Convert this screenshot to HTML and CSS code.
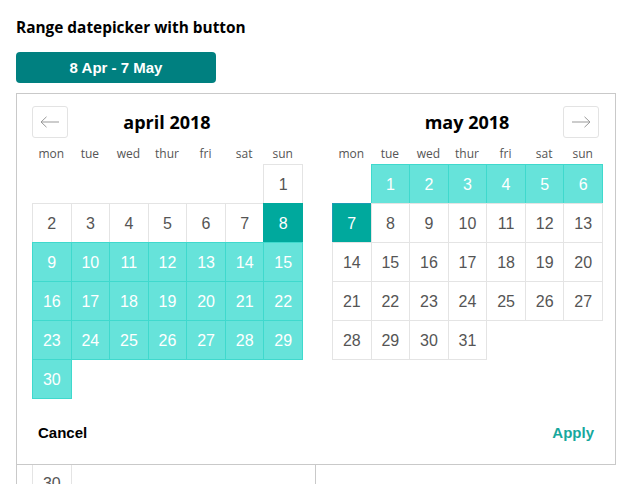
FILE: index.html
```html
<!DOCTYPE html>
<html lang="en">
  <head>
    <meta charset="UTF-8" />
    <meta name="viewport" content="width=device-width, initial-scale=1.0" />
    <title>Range Datepicker</title>
    <link rel="stylesheet" href="styles.css">
  </head>
  <body>
    <div class="page">
      <h3 class="demo-title">Range datepicker with button</h3>

      <div class="picker">
        <button class="picker-toggle">8 Apr - 7 May</button>

        <div class="popup">
          <div class="months">
            <section class="month">
              <div class="month-head">
                <button class="nav nav-prev" aria-label="previous month">
                  <svg width="20" height="12" viewBox="0 0 20 12"><path d="M19 6H1M6.5 0.8L1 6l5.5 5.2" fill="none" stroke="#999" stroke-width="1"/></svg>
                </button>
                <h4 class="month-title">april 2018</h4>
              </div>
              <div class="weekdays">
                <span>mon</span><span>tue</span><span>wed</span><span>thur</span><span>fri</span><span>sat</span><span>sun</span>
              </div>
              <div class="days">
                <span class="empty"></span><span class="empty"></span><span class="empty"></span><span class="empty"></span><span class="empty"></span><span class="empty"></span>
                <span class="day">1</span>
                <span class="day">2</span><span class="day">3</span><span class="day">4</span><span class="day">5</span><span class="day">6</span><span class="day">7</span>
                <span class="day selected">8</span>
                <span class="day in-range">9</span><span class="day in-range">10</span><span class="day in-range">11</span><span class="day in-range">12</span><span class="day in-range">13</span><span class="day in-range">14</span><span class="day in-range">15</span>
                <span class="day in-range">16</span><span class="day in-range">17</span><span class="day in-range">18</span><span class="day in-range">19</span><span class="day in-range">20</span><span class="day in-range">21</span><span class="day in-range">22</span>
                <span class="day in-range">23</span><span class="day in-range">24</span><span class="day in-range">25</span><span class="day in-range">26</span><span class="day in-range">27</span><span class="day in-range">28</span><span class="day in-range">29</span>
                <span class="day in-range">30</span>
              </div>
            </section>

            <section class="month">
              <div class="month-head">
                <h4 class="month-title">may 2018</h4>
                <button class="nav nav-next" aria-label="next month">
                  <svg width="20" height="12" viewBox="0 0 20 12"><path d="M1 6h18M13.5 0.8L19 6l-5.5 5.2" fill="none" stroke="#999" stroke-width="1"/></svg>
                </button>
              </div>
              <div class="weekdays">
                <span>mon</span><span>tue</span><span>wed</span><span>thur</span><span>fri</span><span>sat</span><span>sun</span>
              </div>
              <div class="days">
                <span class="empty"></span>
                <span class="day in-range">1</span><span class="day in-range">2</span><span class="day in-range">3</span><span class="day in-range">4</span><span class="day in-range">5</span><span class="day in-range">6</span>
                <span class="day selected focused">7</span>
                <span class="day">8</span><span class="day">9</span><span class="day">10</span><span class="day">11</span><span class="day">12</span><span class="day">13</span>
                <span class="day">14</span><span class="day">15</span><span class="day">16</span><span class="day">17</span><span class="day">18</span><span class="day">19</span><span class="day">20</span>
                <span class="day">21</span><span class="day">22</span><span class="day">23</span><span class="day">24</span><span class="day">25</span><span class="day">26</span><span class="day">27</span>
                <span class="day">28</span><span class="day">29</span><span class="day">30</span><span class="day">31</span>
              </div>
            </section>
          </div>

          <div class="popup-footer">
            <button class="link-btn cancel">Cancel</button>
            <button class="link-btn apply">Apply</button>
          </div>
        </div>
      </div>

      <!-- the next demo sits under the open popup, only its last row shows -->
      <div class="inline-cal">
        <div class="days">
          <span class="day">30</span>
        </div>
      </div>
    </div>
  </body>
</html>
```

FILE: styles.css
```css
body {
  margin: 0;
  padding: 0;
  background-color: #fff;
  font-family: "Liberation Sans", Arial, sans-serif;
  color: #000;
}

.page {
  padding: 16px;
  height: 484px;
  box-sizing: border-box;
  overflow: hidden;
}

.demo-title {
  margin: 0;
  font-family: "Open Sans", "Noto Sans", sans-serif;
  font-size: 15.4px;
  font-weight: 700;
  line-height: 24px;
}

.picker {
  position: relative;
  margin-top: 12px;
}

.picker-toggle {
  display: block;
  width: 200px;
  height: 31px;
  padding: 0;
  border: none;
  border-radius: 4px;
  background-color: #008080;
  color: #fff;
  font-family: "Liberation Sans", Arial, sans-serif;
  font-size: 15px;
  font-weight: 700;
  cursor: pointer;
}

.popup {
  position: absolute;
  top: 41px;
  left: 0;
  z-index: 10;
  width: 600px;
  box-sizing: border-box;
  border: 1px solid #c9c9c9;
  background-color: #fff;
}

.months {
  display: flex;
  gap: 30px;
  padding: 12px 13px 0 15px;
}

.month {
  width: 270px;
}

.month-head {
  display: grid;
  grid-template-columns: 36px 1fr 36px;
  align-items: center;
  height: 32px;
}

.month-title {
  grid-column: 2;
  grid-row: 1;
  margin: 0;
  text-align: center;
  font-family: "Open Sans", "Noto Sans", sans-serif;
  font-size: 18px;
  font-weight: 700;
  line-height: 24px;
}

.nav {
  grid-row: 1;
  display: flex;
  align-items: center;
  justify-content: center;
  width: 36px;
  height: 32px;
  padding: 0;
  border: 1px solid #e3e3e3;
  border-radius: 3px;
  background: #fff;
  cursor: pointer;
}

.nav-prev {
  grid-column: 1;
}

.nav-next {
  grid-column: 3;
  margin-left: -3px;
}

.weekdays {
  display: grid;
  grid-template-columns: repeat(7, 1fr);
  padding-top: 6px;
  font-family: "Open Sans", "Noto Sans", sans-serif;
  font-size: 12px;
  line-height: 20px;
  color: #555;
  text-align: center;
}

.days {
  display: grid;
  grid-template-columns: repeat(7, 1fr);
  grid-auto-rows: 39px;
  width: 270px;
}

.day {
  display: flex;
  align-items: center;
  justify-content: center;
  margin: 0 -1px -1px 0;
  padding-top: 2px;
  border: 1px solid #e4e4e4;
  background-color: #fff;
  font-size: 16px;
  color: #555;
}

.day.in-range {
  background-color: #66e3da;
  border-color: #3fd9cd;
  color: #fff;
}

.day.selected {
  background-color: #00a99d;
  border-color: #00a99d;
  color: #fff;
}

.day.focused {
  border-color: #1b9db3;
}

.popup-footer {
  display: flex;
  justify-content: space-between;
  padding: 26px 21px 22px;
}

.link-btn {
  padding: 0;
  border: none;
  background: none;
  font-family: "Liberation Sans", Arial, sans-serif;
  font-size: 15px;
  font-weight: 700;
  line-height: 18px;
  cursor: pointer;
}

.cancel {
  color: #000;
}

.apply {
  color: #17a89d;
}

.inline-cal {
  width: 300px;
  box-sizing: border-box;
  margin-top: 365px;
  padding: 14px 15px;
  border: 1px solid #c9c9c9;
}
```
